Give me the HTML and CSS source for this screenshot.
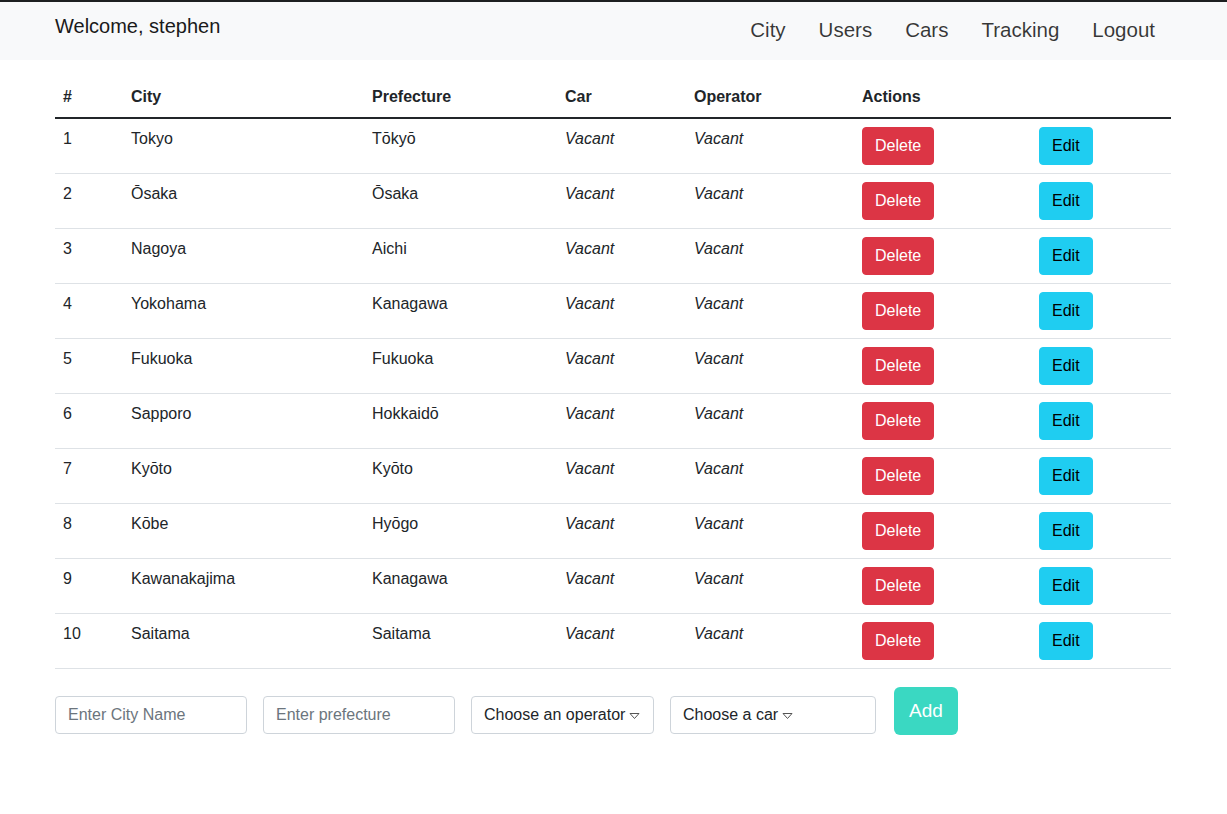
FILE: index.html
```html
<!DOCTYPE html>
<html>
<head>
<meta charset="utf-8">
<link rel="stylesheet" href="styles.css">
</head>
<body>
<nav class="navbar">
  <div class="nav-inner">
    <span class="welcome">Welcome, stephen</span>
    <ul class="nav-links">
      <li><a href="#">City</a></li>
      <li><a href="#">Users</a></li>
      <li><a href="#">Cars</a></li>
      <li><a href="#">Tracking</a></li>
      <li><a href="#">Logout</a></li>
    </ul>
  </div>
</nav>
<main class="container">
  <table class="cities">
    <colgroup>
      <col class="c-num"><col class="c-city"><col class="c-pref"><col class="c-car"><col class="c-op"><col class="c-act"><col class="c-edit">
    </colgroup>
    <thead>
      <tr><th>#</th><th>City</th><th>Prefecture</th><th>Car</th><th>Operator</th><th>Actions</th><th></th></tr>
    </thead>
    <tbody>
      <tr><td>1</td><td>Tokyo</td><td>Tōkyō</td><td><em>Vacant</em></td><td><em>Vacant</em></td><td><button class="btn btn-danger">Delete</button></td><td><button class="btn btn-info">Edit</button></td></tr>
      <tr><td>2</td><td>Ōsaka</td><td>Ōsaka</td><td><em>Vacant</em></td><td><em>Vacant</em></td><td><button class="btn btn-danger">Delete</button></td><td><button class="btn btn-info">Edit</button></td></tr>
      <tr><td>3</td><td>Nagoya</td><td>Aichi</td><td><em>Vacant</em></td><td><em>Vacant</em></td><td><button class="btn btn-danger">Delete</button></td><td><button class="btn btn-info">Edit</button></td></tr>
      <tr><td>4</td><td>Yokohama</td><td>Kanagawa</td><td><em>Vacant</em></td><td><em>Vacant</em></td><td><button class="btn btn-danger">Delete</button></td><td><button class="btn btn-info">Edit</button></td></tr>
      <tr><td>5</td><td>Fukuoka</td><td>Fukuoka</td><td><em>Vacant</em></td><td><em>Vacant</em></td><td><button class="btn btn-danger">Delete</button></td><td><button class="btn btn-info">Edit</button></td></tr>
      <tr><td>6</td><td>Sapporo</td><td>Hokkaidō</td><td><em>Vacant</em></td><td><em>Vacant</em></td><td><button class="btn btn-danger">Delete</button></td><td><button class="btn btn-info">Edit</button></td></tr>
      <tr><td>7</td><td>Kyōto</td><td>Kyōto</td><td><em>Vacant</em></td><td><em>Vacant</em></td><td><button class="btn btn-danger">Delete</button></td><td><button class="btn btn-info">Edit</button></td></tr>
      <tr><td>8</td><td>Kōbe</td><td>Hyōgo</td><td><em>Vacant</em></td><td><em>Vacant</em></td><td><button class="btn btn-danger">Delete</button></td><td><button class="btn btn-info">Edit</button></td></tr>
      <tr><td>9</td><td>Kawanakajima</td><td>Kanagawa</td><td><em>Vacant</em></td><td><em>Vacant</em></td><td><button class="btn btn-danger">Delete</button></td><td><button class="btn btn-info">Edit</button></td></tr>
      <tr><td>10</td><td>Saitama</td><td>Saitama</td><td><em>Vacant</em></td><td><em>Vacant</em></td><td><button class="btn btn-danger">Delete</button></td><td><button class="btn btn-info">Edit</button></td></tr>
    </tbody>
  </table>
  <form class="add-form">
    <input class="field f-city" type="text" placeholder="Enter City Name">
    <input class="field f-pref" type="text" placeholder="Enter prefecture">
    <div class="field select f-op"><span>Choose an operator</span><svg class="caret" width="11" height="8" viewBox="0 0 11 8"><path d="M1 1.5 L10 1.5 L5.5 6.5 Z" fill="none" stroke="#555" stroke-width="1"/></svg></div>
    <div class="field select f-car"><span>Choose a car</span><svg class="caret" width="11" height="8" viewBox="0 0 11 8"><path d="M1 1.5 L10 1.5 L5.5 6.5 Z" fill="none" stroke="#555" stroke-width="1"/></svg></div>
    <button type="button" class="btn-add">Add</button>
  </form>
</main>
</body>
</html>
```
FILE: styles.css
```css
* { box-sizing: border-box; }
html, body { margin: 0; padding: 0; }
body {
  font-family: "Liberation Sans", Arial, sans-serif;
  font-size: 16px;
  line-height: 1.5;
  color: #212529;
  background: #fff;
  border-top: 2px solid #1d1f21;
}
.navbar {
  background: #f8f9fa;
  height: 58px;
}
.nav-inner {
  width: 1116px;
  margin-left: 55px;
  display: flex;
  justify-content: space-between;
  align-items: flex-start;
}
.welcome {
  font-size: 20px;
  line-height: 24px;
  padding-top: 12px;
  color: #1a1a1a;
}
.nav-links {
  list-style: none;
  margin: 0;
  padding: 0;
  display: flex;
  padding-top: 16px;
}
.nav-links a {
  display: block;
  font-size: 20.5px;
  line-height: 24px;
  padding: 0 16.5px;
  color: rgba(0,0,0,0.78);
  text-decoration: none;
}
.nav-links li:last-child a { padding-right: 16px; }
.container {
  width: 1116px;
  margin: 17px 0 0 55px;
}
.cities {
  width: 100%;
  border-collapse: collapse;
  table-layout: fixed;
}
.c-num { width: 68px; }
.c-city { width: 241px; }
.c-pref { width: 193px; }
.c-car { width: 129px; }
.c-op { width: 168px; }
.c-act { width: 177px; }
.c-edit { width: 140px; }
.cities th {
  text-align: left;
  font-weight: bold;
  padding: 8px;
  line-height: 24px;
  border-bottom: 2px solid #212529;
}
.cities td {
  padding: 8px;
  line-height: 24px;
  vertical-align: top;
  border-bottom: 1px solid #dee2e6;
}
.cities em { font-style: italic; }
.btn {
  font-family: inherit;
  font-size: 16px;
  line-height: 24px;
  padding: 6px 12px;
  border: 1px solid transparent;
  border-radius: 4px;
  cursor: pointer;
  display: inline-block;
}
.btn-danger { background: #dc3545; border-color: #dc3545; color: #fff; }
.btn-info { background: #1fcdf1; border-color: #1fcdf1; color: #000; }
.add-form {
  display: flex;
  align-items: flex-start;
  margin-top: 18px;
}
.field {
  height: 38px;
  margin-top: 9px;
  border: 1px solid #ced4da;
  border-radius: 4px;
  font-family: inherit;
  font-size: 16px;
  padding: 6px 12px;
  color: #212529;
  background: #fff;
}
.field::placeholder { color: #6c757d; }
.f-city { width: 192px; margin-right: 16px; }
.f-pref { width: 192px; margin-right: 16px; }
.f-op { width: 183px; margin-right: 16px; }
.f-car { width: 206px; margin-right: 18px; }
.select {
  display: flex;
  align-items: center;
  line-height: 24px;
  white-space: nowrap;
  padding-right: 4px;
}
.caret { flex-shrink: 0; margin-left: 4px; margin-top: 2px; }
.btn-add {
  width: 64px;
  height: 48px;
  border: none;
  border-radius: 6px;
  background: #3ad8c2;
  color: #fff;
  font-family: inherit;
  font-size: 19px;
  padding: 0;
  cursor: pointer;
}
```
